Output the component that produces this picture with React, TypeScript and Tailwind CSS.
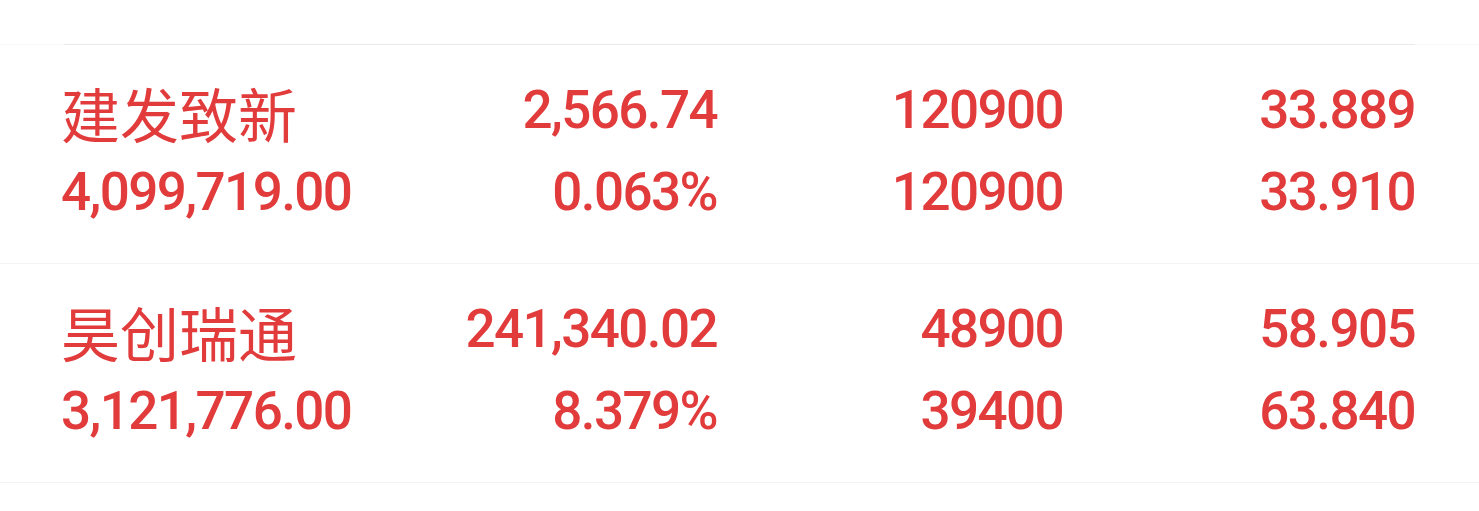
const rows = [
  {
    name: '建发致新',
    amount: '4,099,719.00',
    price: '2,566.74',
    ratio: '0.063%',
    qtyA: '120900',
    qtyB: '120900',
    costA: '33.889',
    costB: '33.910',
  },
  {
    name: '昊创瑞通',
    amount: '3,121,776.00',
    price: '241,340.02',
    ratio: '8.379%',
    qtyA: '48900',
    qtyB: '39400',
    costA: '58.905',
    costB: '63.840',
  },
]

const num = "font-['Roboto','Liberation_Sans',sans-serif] font-medium text-[53px] leading-[82px] tracking-[-1.6px]"

export default function App() {
  return (
    <div className="min-h-[511px] w-[1479px] bg-white text-[#e13b3b]">
      <div className="h-[44px]" />
      <div className="h-px bg-[#f7f7f7]">
        <div className="mx-[64px] h-px bg-[#e9e9e9]" />
      </div>
      {rows.map((r, i) => (
        <div
          key={r.name}
          className={
            i > 0
              ? 'grid grid-cols-[360px_296px_346px_352px] border-t border-[#f3f3f3] pt-[24px] pb-[30px] pl-[61px]'
              : 'grid grid-cols-[360px_296px_346px_352px] pt-[24px] pb-[30px] pl-[61px]'
          }
        >
          <div>
            <div className="pt-[5px] h-[82px] font-['Noto_Sans_CJK_SC','Noto_Sans',sans-serif] text-[59px] leading-[77px]">
              {r.name}
            </div>
            <div className={num}>{r.amount}</div>
          </div>
          <div className="text-right">
            <div className={num}>{r.price}</div>
            <div className={num}>{r.ratio}</div>
          </div>
          <div className="text-right">
            <div className={num}>{r.qtyA}</div>
            <div className={num}>{r.qtyB}</div>
          </div>
          <div className="text-right">
            <div className={num}>{r.costA}</div>
            <div className={num}>{r.costB}</div>
          </div>
        </div>
      ))}
      <div className="h-px bg-[#f3f3f3]" />
    </div>
  )
}
